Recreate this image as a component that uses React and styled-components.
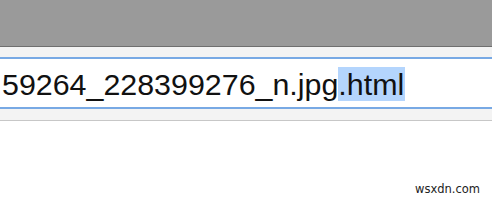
import React from "react";
import styled, { createGlobalStyle } from "styled-components";

const GlobalStyle = createGlobalStyle`
  html, body {
    margin: 0;
    padding: 0;
    background: #ffffff;
    overflow: hidden;
  }
`;

function App() {
  return (
    <Page>
      <GlobalStyle />
      <TitleBar />
      <Toolbar>
        <AddressField>
          <Url>
            59264_228399276_n.jpg<Selected>.html</Selected>
          </Url>
        </AddressField>
      </Toolbar>
      <Footer>
        <Watermark>wsxdn.com</Watermark>
      </Footer>
    </Page>
  );
}

export default App;

const Page = styled.div`
  width: 492px;
  height: 201px;
  display: flex;
  flex-direction: column;
  background: #ffffff;
`;

const TitleBar = styled.div`
  height: 46px;
  background: #9a9a9a;
  border-bottom: 1px solid #6f6f6f;
`;

const Toolbar = styled.div`
  background: #f3f3f3;
  padding: 10px 0 11px;
  border-bottom: 1px solid #c7c7c7;
`;

const AddressField = styled.div`
  height: 48px;
  background: #ffffff;
  border-top: 2px solid #78a9e4;
  border-bottom: 2px solid #78a9e4;
  display: flex;
  align-items: center;
  overflow: hidden;
`;

const Url = styled.div`
  padding-left: 2px;
  font-family: "Liberation Sans", Arial, sans-serif;
  font-size: 30.4px;
  line-height: 34px;
  color: #111111;
  white-space: nowrap;
  margin-top: 1px;
`;

const Selected = styled.span`
  background: #b4d5fd;
  padding: 0 1px 0 0;
`;

const Footer = styled.div`
  flex: 1;
  display: flex;
  justify-content: flex-end;
  align-items: flex-end;
  padding: 0 12px 5px 0;
`;

const Watermark = styled.span`
  font-family: "DejaVu Sans", Verdana, sans-serif;
  font-size: 11.5px;
  color: #222222;
`;
